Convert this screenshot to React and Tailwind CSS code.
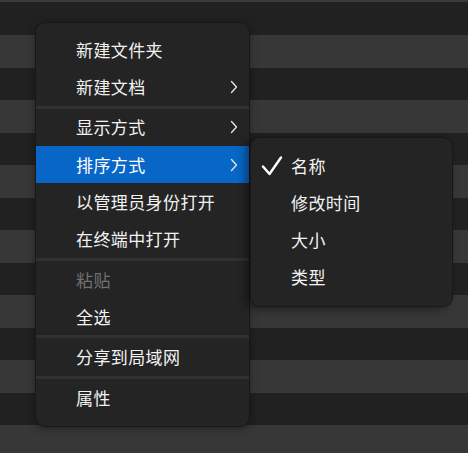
import React from "react";

const Chevron = () => (
  <svg width="8" height="14" viewBox="0 0 8 14" className="absolute right-[11px] top-1/2 -translate-y-1/2">
    <path d="M1.5 1.5 L6.5 7 L1.5 12.5" fill="none" stroke="#e6e6e6" strokeWidth="1.3" strokeLinecap="round" strokeLinejoin="round" />
  </svg>
);

const Item = ({ label, sub, active, disabled }) => (
  <div
    className={
      "relative flex h-[37.3px] items-center pl-[40px] tracking-[0.4px] " +
      (active ? "bg-[#0866c6] text-white " : "") +
      (disabled ? "text-[#707070]" : "text-[#f2f2f2]")
    }
  >
    {label}
    {sub && <Chevron />}
  </div>
);

const Sep = () => <div className="h-[3px] bg-[#313131]" />;

export default function App() {
  const rows = [];
  for (let i = 0; i < 14; i++) {
    const light = i % 2 === 1;
    rows.push(
      <div
        key={i}
        className={light ? "h-[33px] bg-[#373737]" : "h-[32px] bg-[#212121]"}
      />
    );
  }
  return (
    <div
      className="relative h-[453px] w-[468px] overflow-hidden bg-[#212121]"
      style={{ fontFamily: '"Noto Sans CJK SC", "Noto Sans", sans-serif' }}
    >
      <div className="h-[2px] bg-[#3a3a3a]" />
      <div className="h-[1px] bg-[#212121]" />
      {rows}

      {/* main menu */}
      <div className="absolute left-[35px] top-[22px] w-[215px] overflow-hidden rounded-[10px] border border-[#181818] bg-[#242424] pt-2 pb-[10px] text-[17px] shadow-[0_2px_8px_rgba(0,0,0,0.35)]">
        <Item label="新建文件夹" />
        <Item label="新建文档" sub />
        <Sep />
        <Item label="显示方式" sub />
        <Item label="排序方式" sub active />
        <Item label="以管理员身份打开" />
        <Item label="在终端中打开" />
        <Sep />
        <Item label="粘贴" disabled />
        <Item label="全选" />
        <Sep />
        <Item label="分享到局域网" />
        <Sep />
        <Item label="属性" />
      </div>

      {/* submenu */}
      <div className="absolute left-[250px] top-[137px] w-[203px] rounded-[10px] border border-[#181818] bg-[#242424] pt-[9px] pb-[10px] text-[17px] shadow-[-4px_2px_10px_rgba(0,0,0,0.45)]">
        {["名称", "修改时间", "大小", "类型"].map((t, i) => (
          <div key={t} className="relative flex h-[37.2px] items-center pl-[40px] tracking-[0.4px] text-[#f2f2f2]">
            {i === 0 && (
              <svg width="22" height="20" viewBox="0 0 22 20" className="absolute left-[10px] top-[9px]">
                <path d="M2 10.5 L8.5 18 L20 1.5" fill="none" stroke="#ffffff" strokeWidth="2.4" strokeLinecap="round" strokeLinejoin="round" />
              </svg>
            )}
            {t}
          </div>
        ))}
      </div>
    </div>
  );
}
